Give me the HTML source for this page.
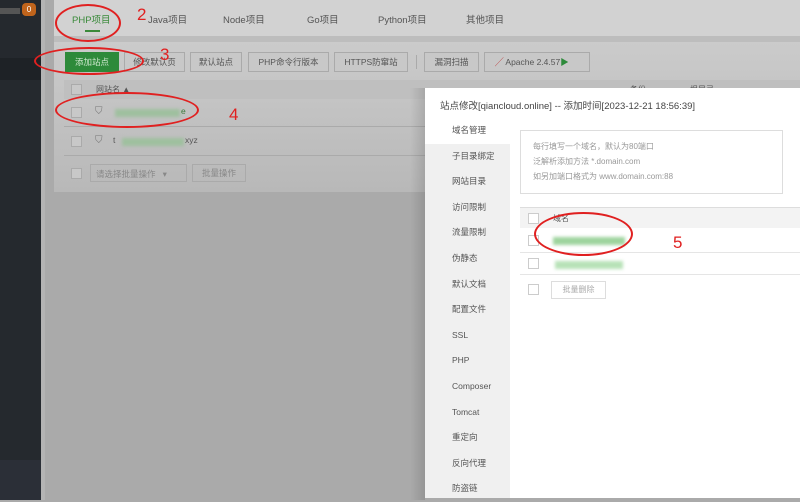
<!DOCTYPE html>
<html><head><meta charset="utf-8"><style>
*{margin:0;padding:0;box-sizing:border-box}
body{width:800px;height:500px;overflow:hidden;background:#aaa;font-family:"Liberation Sans","Noto Sans CJK SC",sans-serif;font-size:9px;color:#555;position:relative}
.a{position:absolute}
.btn{position:absolute;top:52px;height:20px;border:1px solid #aaa;background:#c8c8c8;line-height:18px;text-align:center;color:#555;font-size:8.5px}
.cb{position:absolute;width:11px;height:11px;border:1px solid #aaa;background:#c8c8c8}
.menu div{height:25.6px;line-height:25.6px;padding-left:27px;font-size:8.5px;color:#555}
.red{position:absolute;border:2px solid #e02020;border-radius:50%}
.num{position:absolute;color:#e02020;font-size:17px}
.blur{position:absolute;height:8px;background:#a8d8a8;filter:blur(1.5px)}
</style></head><body>
<div class="a" style="left:0;top:0;width:41px;height:500px;background:#25292e"></div>
<div class="a" style="left:0;top:460px;width:41px;height:40px;background:#2b2f37"></div>
<div class="a" style="left:0;top:58px;width:41px;height:22px;background:#1e2226"></div>
<div class="a" style="left:0;top:8px;width:20px;height:6px;background:#555"></div>
<div class="a" style="left:22px;top:3px;width:14px;height:13px;border-radius:4px;background:#c0641c;color:#fff;font-size:8px;text-align:center;line-height:13px">0</div>
<div class="a" style="left:41px;top:0;width:4px;height:500px;background:#b4b4b4"></div>
<div class="a" style="left:54px;top:0;width:746px;height:36px;background:#d2d2d2"></div>
<div class="a" style="left:54px;top:36px;width:746px;height:6px;background:#bdbdbd"></div>
<div class="a" style="left:72px;top:12px;font-size:9.5px;color:#3a8a3a">PHP项目</div>
<div class="a" style="left:85px;top:30px;width:15px;height:2px;background:#3a8a3a"></div>
<div class="a" style="left:148px;top:12px;font-size:9.5px">Java项目</div>
<div class="a" style="left:223px;top:12px;font-size:9.5px">Node项目</div>
<div class="a" style="left:307px;top:12px;font-size:9.5px">Go项目</div>
<div class="a" style="left:378px;top:12px;font-size:9.5px">Python项目</div>
<div class="a" style="left:466px;top:12px;font-size:9.5px">其他项目</div>
<div class="a" style="left:54px;top:42px;width:746px;height:150px;background:linear-gradient(#cbcbcb,#b8b8b8)"></div>
<div class="btn" style="left:65px;width:54px;background:#2d8a3a;border-color:#2d8a3a;color:#cfe8cf">添加站点</div>
<div class="btn" style="left:124px;width:61px">修改默认页</div>
<div class="btn" style="left:190px;width:52px">默认站点</div>
<div class="btn" style="left:248px;width:81px">PHP命令行版本</div>
<div class="btn" style="left:334px;width:74px">HTTPS防窜站</div>
<div class="a" style="left:416px;top:55px;width:1px;height:14px;background:#aaa"></div>
<div class="btn" style="left:424px;width:55px">漏洞扫描</div>
<div class="btn" style="left:484px;width:106px;text-align:left;padding-left:10px"><span style="color:#b33">╱</span> Apache 2.4.57<span style="color:#2d8a3a">▶</span></div>
<div class="a" style="left:64px;top:80px;width:736px;height:19px;background:#bfbfbf"></div>
<div class="cb" style="left:71px;top:84px"></div>
<div class="a" style="left:96px;top:84px;font-size:8px">网站名 ▲</div>
<div class="a" style="left:630px;top:84px;font-size:8px">备份</div>
<div class="a" style="left:690px;top:84px;font-size:8px">根目录</div>
<div class="a" style="left:64px;top:126px;width:736px;height:1px;background:#aaa"></div>
<div class="a" style="left:64px;top:155px;width:736px;height:1px;background:#aaa"></div>
<div class="cb" style="left:71px;top:107px"></div>
<div class="cb" style="left:71px;top:136px"></div>
<div class="a" style="left:95px;top:106px;font-size:10px;color:#777">⛉</div>
<div class="a" style="left:95px;top:135px;font-size:10px;color:#777">⛉</div>
<div class="blur" style="left:115px;top:109px;width:65px;background:#9fc09f"></div>
<div class="a" style="left:181px;top:106px;font-size:8.5px;color:#3a7a3a">e</div>
<div class="a" style="left:113px;top:135px;font-size:8.5px">t</div>
<div class="blur" style="left:122px;top:138px;width:62px;background:#9fc09f"></div>
<div class="a" style="left:185px;top:135px;font-size:8.5px">xyz</div>
<div class="cb" style="left:71px;top:168px"></div>
<div class="a" style="left:90px;top:164px;width:97px;height:18px;border:1px solid #aaa;padding:3px 5px;font-size:8.5px;color:#888">请选择批量操作 &nbsp; ▾</div>
<div class="a" style="left:192px;top:164px;width:54px;height:18px;border:1px solid #aaa;text-align:center;line-height:16px;font-size:8.5px;color:#888">批量操作</div>
<div class="a" style="left:410px;top:88px;width:15px;height:412px;background:linear-gradient(90deg,rgba(0,0,0,0),rgba(0,0,0,.12))"></div>
<div class="a" style="left:425px;top:88px;width:375px;height:410px;background:#fff"></div>
<div class="a" style="left:440px;top:98px;font-size:9.5px;color:#444">站点修改[qiancloud.online] -- 添加时间[2023-12-21 18:56:39]</div>
<div class="a menu" style="left:425px;top:118px;width:85px;height:380px;background:#f0f0f0">
<div style="background:#fff">域名管理</div><div>子目录绑定</div><div>网站目录</div><div>访问限制</div><div>流量限制</div><div>伪静态</div><div>默认文档</div><div>配置文件</div><div>SSL</div><div>PHP</div><div>Composer</div><div>Tomcat</div><div>重定向</div><div>反向代理</div><div>防盗链</div></div>
<div class="a" style="left:520px;top:130px;width:263px;height:64px;border:1px solid #ddd;padding:8px 12px;font-size:8px;color:#999;line-height:15px">每行填写一个域名，默认为80端口<br>泛解析添加方法 *.domain.com<br>如另加端口格式为 www.domain.com:88</div>
<div class="a" style="left:520px;top:207px;width:280px;height:21px;background:#f3f3f3;border-top:1px solid #ddd"></div>
<div class="cb" style="left:528px;top:213px;background:#fff;border-color:#ccc"></div>
<div class="a" style="left:553px;top:213px;font-size:8px">域名</div>
<div class="a" style="left:520px;top:252px;width:280px;height:1px;background:#e5e5e5"></div>
<div class="a" style="left:520px;top:274px;width:280px;height:1px;background:#e5e5e5"></div>
<div class="cb" style="left:528px;top:235px;background:#fff;border-color:#ccc"></div>
<div class="cb" style="left:528px;top:258px;background:#fff;border-color:#ccc"></div>
<div class="blur" style="left:553px;top:237px;width:72px;background:#9ed49e"></div>
<div class="blur" style="left:555px;top:261px;width:68px;background:#b8e2b8"></div>
<div class="cb" style="left:528px;top:284px;background:#fff;border-color:#ccc"></div>
<div class="a" style="left:551px;top:281px;width:55px;height:18px;border:1px solid #ddd;text-align:center;line-height:16px;font-size:8px;color:#aaa">批量删除</div>
<div class="red" style="left:55px;top:4px;width:66px;height:38px"></div>
<div class="num" style="left:137px;top:5px">2</div>
<div class="red" style="left:34px;top:47px;width:110px;height:28px"></div>
<div class="num" style="left:160px;top:45px">3</div>
<div class="red" style="left:55px;top:92px;width:144px;height:36px"></div>
<div class="num" style="left:229px;top:105px">4</div>
<div class="red" style="left:534px;top:212px;width:99px;height:44px"></div>
<div class="num" style="left:673px;top:233px">5</div>
</body></html>
